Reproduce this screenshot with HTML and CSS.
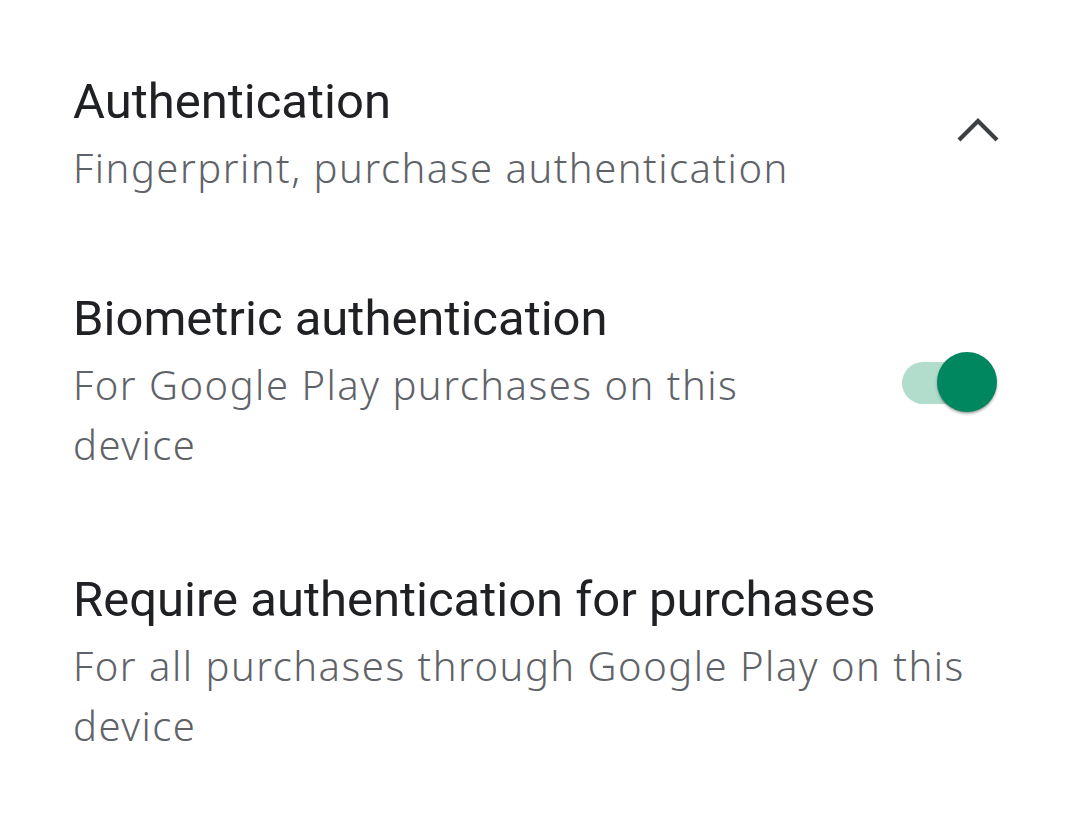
FILE: index.html
```html
<!DOCTYPE html>
<html>
<head>
<meta charset="utf-8">
<link rel="stylesheet" href="styles.css">
</head>
<body>
<div class="list">
  <div class="row row-head">
    <div class="text">
      <div class="title">Authentication</div>
      <div class="sub">Fingerprint, purchase authentication</div>
    </div>
    <svg class="chevron" width="44" height="26" viewBox="0 0 44 26"><path d="M3 22 L22 3 L41 22" fill="none" stroke="#3c4043" stroke-width="4.2"/></svg>
  </div>
  <div class="row row-bio">
    <div class="text">
      <div class="title">Biometric authentication</div>
      <div class="sub">For Google Play purchases on this device</div>
    </div>
    <div class="switch"><div class="track"></div><div class="knob"></div></div>
  </div>
  <div class="row row-req">
    <div class="text">
      <div class="title">Require authentication for purchases</div>
      <div class="sub">For all purchases through Google Play on this device</div>
    </div>
  </div>
</div>
</body>
</html>
```
FILE: styles.css
```css
html, body { margin: 0; padding: 0; background: #fff; }
body { width: 1080px; height: 814px; overflow: hidden; }
.list { display: flex; flex-direction: column; padding: 73px 80px 0 73px; }
.row { display: flex; align-items: center; gap: 60px; }
.text { flex: 1; min-width: 0; }
.title { font-family: Roboto, "Liberation Sans", sans-serif; font-size: 49px; line-height: 58px; color: #202124; }
.sub { margin-top: 7px; font-family: "Noto Sans", "Open Sans", sans-serif; font-weight: 300; font-size: 40px; line-height: 60px; color: #5f6368; letter-spacing: 1.5px; }
.row-bio { margin-top: 92px; }
.row-req { margin-top: 96px; }
.chevron { display: block; flex: none; margin-bottom: 9px; }
.switch { position: relative; flex: none; width: 95px; height: 62px; margin-right: 3px; }
.track { position: absolute; left: 0; top: 10px; width: 80px; height: 42px; border-radius: 21px; background: #b2ddcd; }
.knob { position: absolute; right: 0; top: 0; width: 60px; height: 60px; border-radius: 50%; background: #01875f; box-shadow: 0 2px 3px rgba(0,0,0,0.28), 0 1px 1px rgba(0,0,0,0.14); }
```
